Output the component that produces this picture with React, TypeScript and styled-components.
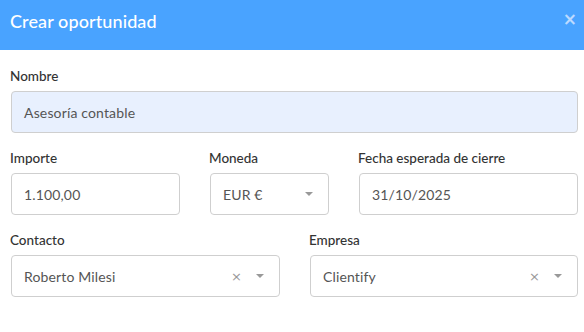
import React from "react";
import styled, { createGlobalStyle } from "styled-components";

const Global = createGlobalStyle`
  html, body { margin: 0; padding: 0; background: #fff; }
  body { font-family: "Lato", "Noto Sans", sans-serif; -webkit-font-smoothing: antialiased; }
  * { box-sizing: border-box; }
`;

const Modal = styled.div`
  width: 584px;
  height: 332px;
  background: #fff;
  overflow: hidden;
`;

const Header = styled.div`
  height: 50px;
  background: #49a3ff;
  display: flex;
  align-items: center;
  justify-content: space-between;
  padding: 0 7px 8px 10px;
`;

const Title = styled.h1`
  margin: 0;
  font-size: 18px;
  font-weight: 500;
  color: #fff;
  letter-spacing: 0.1px;
`;

const Close = styled.span`
  color: #bcdaff;
  font-size: 17px;
  font-weight: 900;
  line-height: 1;
  margin-top: -3px;
  font-family: "DejaVu Sans", sans-serif;
`;

const Body = styled.div`
  padding: 16px 6px 0 11px;
  display: flex;
  flex-direction: column;
  gap: 15px;
`;

const Row = styled.div<{ $cols: string }>`
  display: grid;
  grid-template-columns: ${(p) => p.$cols};
  column-gap: 30px;
`;

const Field = styled.div`
  display: flex;
  flex-direction: column;
`;

const Label = styled.label`
  font-size: 13.5px;
  font-weight: 500;
  color: #333;
  line-height: 20px;
  margin-bottom: 5px;
  margin-left: -1px;
`;

const Box = styled.div<{ $filled?: boolean }>`
  height: 42px;
  border: 1px solid #cfcfcf;
  border-radius: 4px;
  background: ${(p) => (p.$filled ? "#e8f0fe" : "#fff")};
  display: flex;
  align-items: center;
  padding: 0 12px 0 12px;
  font-size: 14px;
  color: #555;
`;

const Value = styled.span`
  flex: 1;
  white-space: nowrap;
  letter-spacing: 0.15px;
`;

const Clear = styled.span`
  color: #999;
  font-size: 13px;
  margin-right: 14px;
  font-family: "DejaVu Sans", sans-serif;
`;

const Arrow = styled.span`
  width: 0;
  height: 0;
  border-left: 4px solid transparent;
  border-right: 4px solid transparent;
  border-top: 4px solid #999;
  margin-right: 3px;
`;

export default function App() {
  return (
    <>
      <Global />
      <Modal>
        <Header>
          <Title>Crear oportunidad</Title>
          <Close>×</Close>
        </Header>
        <Body>
          <Field>
            <Label>Nombre</Label>
            <Box $filled>
              <Value>Asesoría contable</Value>
            </Box>
          </Field>
          <Row $cols="169px 119px 219px">
            <Field>
              <Label>Importe</Label>
              <Box>
                <Value>1.100,00</Value>
              </Box>
            </Field>
            <Field>
              <Label>Moneda</Label>
              <Box>
                <Value>EUR €</Value>
                <Arrow />
              </Box>
            </Field>
            <Field>
              <Label>Fecha esperada de cierre</Label>
              <Box>
                <Value>31/10/2025</Value>
              </Box>
            </Field>
          </Row>
          <Row $cols="269px 268px">
            <Field>
              <Label>Contacto</Label>
              <Box>
                <Value>Roberto Milesi</Value>
                <Clear>×</Clear>
                <Arrow />
              </Box>
            </Field>
            <Field>
              <Label>Empresa</Label>
              <Box>
                <Value>Clientify</Value>
                <Clear>×</Clear>
                <Arrow />
              </Box>
            </Field>
          </Row>
        </Body>
      </Modal>
    </>
  );
}
